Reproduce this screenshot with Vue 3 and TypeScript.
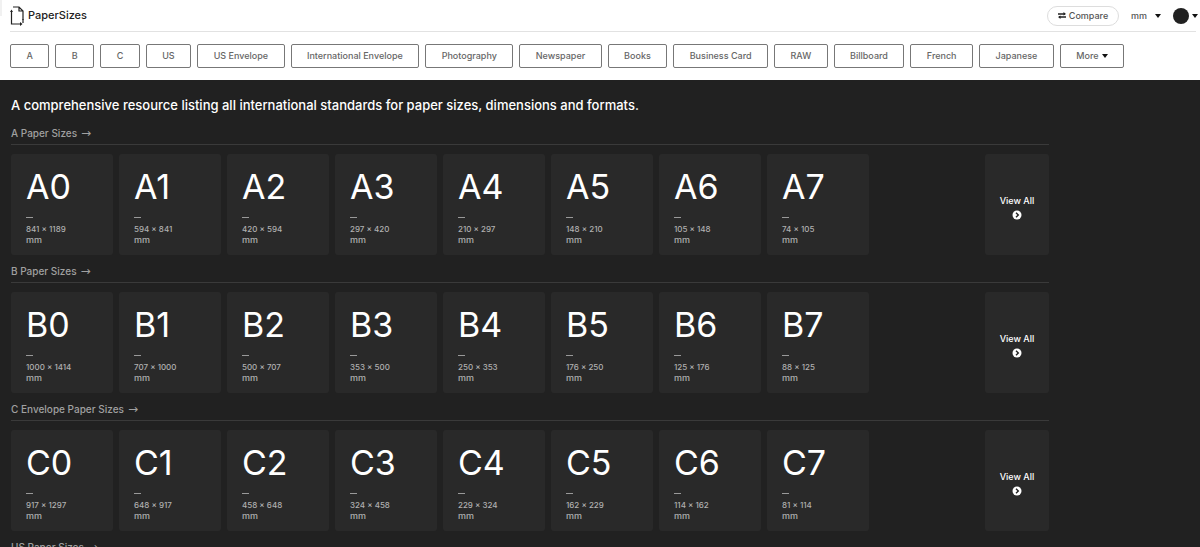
<script setup lang="ts">
import { ref } from 'vue'

interface PaperSize {
  name: string
  dims: string
}
interface Series {
  id: string
  title: string
  sizes: PaperSize[]
}

const categories: string[] = [
  'A', 'B', 'C', 'US', 'US Envelope', 'International Envelope', 'Photography',
  'Newspaper', 'Books', 'Business Card', 'RAW', 'Billboard', 'French', 'Japanese',
]

const unit = ref('mm')

function build(prefix: string, dims: string[]): PaperSize[] {
  return dims.map((d, i) => ({ name: `${prefix}${i}`, dims: d }))
}

const series: Series[] = [
  {
    id: 'a',
    title: 'A Paper Sizes',
    sizes: build('A', ['841 × 1189', '594 × 841', '420 × 594', '297 × 420', '210 × 297', '148 × 210', '105 × 148', '74 × 105']),
  },
  {
    id: 'b',
    title: 'B Paper Sizes',
    sizes: build('B', ['1000 × 1414', '707 × 1000', '500 × 707', '353 × 500', '250 × 353', '176 × 250', '125 × 176', '88 × 125']),
  },
  {
    id: 'c',
    title: 'C Envelope Paper Sizes',
    sizes: build('C', ['917 × 1297', '648 × 917', '458 × 648', '324 × 458', '229 × 324', '162 × 229', '114 × 162', '81 × 114']),
  },
  { id: 'us', title: 'US Paper Sizes', sizes: [] },
]
</script>

<template>
  <div class="page">
    <header class="header">
      <div class="topbar">
        <a class="brand" href="#">
          <svg class="logo" viewBox="0 0 14 20" aria-hidden="true">
            <path d="M3 1H9l4 4v9M9 1v4h4M1.500 6v12H10" fill="none" stroke="#222" stroke-width="1.200" />
            <path d="M0 6l1.500-2.500L3 6zM10 16l2.500 2-2.500 2z" fill="#222" />
            <path d="M13 13v4" stroke="#222" stroke-width="1.200" />
          </svg>
          <span>PaperSizes</span>
        </a>
        <div class="tools">
          <a class="compare" href="#compare">
            <svg class="swap" viewBox="0 0 8 7" aria-hidden="true">
              <path d="M0 2h7M1 5h7" stroke="#222" stroke-width="1.300" />
              <path d="M5.500 0L8 2 5.500 3.500zM2.500 3.500L0 5l2.500 2z" fill="#222" />
            </svg>
            <span>Compare</span>
          </a>
          <label class="unit">
            <select v-model="unit" aria-label="Unit">
              <option>mm</option>
              <option>cm</option>
              <option>in</option>
            </select>
            <svg class="caret" viewBox="0 0 6 4" aria-hidden="true"><path d="M0 0h6L3 4z" /></svg>
          </label>
          <button class="theme" type="button" aria-label="Theme">
            <span class="dot"></span>
            <svg class="caret" viewBox="0 0 6 4" aria-hidden="true"><path d="M0 0h6L3 4z" /></svg>
          </button>
        </div>
      </div>
      <nav class="nav">
        <a v-for="c in categories" :key="c" class="chip" href="#">{{ c }}</a>
        <button class="chip" type="button">
          More
          <svg class="caret" viewBox="0 0 6 4" aria-hidden="true"><path d="M0 0h6L3 4z" /></svg>
        </button>
      </nav>
    </header>

    <main class="main">
      <h1 class="lead">A comprehensive resource listing all international standards for paper sizes, dimensions and formats.</h1>
      <section v-for="s in series" :key="s.id" class="series">
        <h2 class="title"><a :href="`#${s.id}`">{{ s.title }} <span class="arrow">→</span></a></h2>
        <div v-if="s.sizes.length" class="row">
          <div class="cards">
            <a v-for="p in s.sizes" :key="p.name" class="card" :href="`#${p.name}`">
              <span class="name">{{ p.name }}</span>
              <span class="rule"></span>
              <span class="dims">{{ p.dims }}</span>
              <span class="mm">{{ unit }}</span>
            </a>
          </div>
          <a class="all" :href="`#${s.id}`">
            <span>View All</span>
            <svg viewBox="0 0 10 10" aria-hidden="true">
              <circle cx="5" cy="5" r="4.500" fill="#fff" />
              <path d="M4 2.800L6.300 5 4 7.200" fill="none" stroke="#222" stroke-width="1.400" />
            </svg>
          </a>
        </div>
      </section>
    </main>
  </div>
</template>

<style>
body {
  background: #212121;
}
</style>

<style scoped>
.page {
  font-family: Inter, "Liberation Sans", sans-serif;
  font-weight: 500;
  color: #fff;
}
.page * {
  box-sizing: border-box;
}
a {
  color: inherit;
  text-decoration: none;
}
.header {
  position: relative;
  background: #fff;
  color: #555;
  height: 80px;
  padding: 0 4px 0 10px;
}
.header::before {
  content: "";
  position: absolute;
  top: 0;
  left: 0;
  width: 2px;
  height: 16px;
  background: #f1f1f1;
}
.topbar {
  height: 32px;
  display: flex;
  align-items: center;
  justify-content: space-between;
  border-bottom: 1px solid #e2e2e2;
}
.brand {
  display: flex;
  align-items: center;
  gap: 4px;
  font-size: 11px;
  line-height: 16px;
  color: #222;
}
.brand span {
  padding-bottom: 2px;
}
.logo {
  width: 14px;
  height: 20px;
}
.tools {
  display: flex;
  align-items: center;
  margin-right: -2px;
}
.compare {
  display: flex;
  align-items: center;
  justify-content: center;
  gap: 3px;
  width: 72px;
  height: 20px;
  border: 1px solid #ddd;
  border-radius: 10px;
  font-size: 9px;
}
.swap {
  width: 8px;
  height: 7px;
}
.caret {
  width: 6px;
  height: 4px;
  fill: #111;
}
.unit {
  display: flex;
  align-items: center;
  margin-left: 12px;
}
.unit select {
  appearance: none;
  width: 24px;
  padding: 0;
  border: 0;
  background: none;
  font: inherit;
  font-size: 9px;
  color: #555;
}
.theme {
  display: flex;
  align-items: center;
  gap: 3px;
  margin-left: 12px;
  padding: 0;
  border: 0;
  background: none;
}
.dot {
  width: 16px;
  height: 16px;
  border-radius: 50%;
  background: #212121;
}
.nav {
  display: flex;
  gap: 6px;
  padding: 12px 72px 0 0;
}
.chip {
  display: flex;
  flex-grow: 1;
  align-items: center;
  justify-content: center;
  gap: 3px;
  height: 24px;
  padding: 0 15px;
  border: 1px solid #777;
  border-radius: 2px;
  background: #fff;
  font-family: inherit;
  font-size: 9px;
  font-weight: 500;
  line-height: 12px;
  color: #666;
  white-space: nowrap;
}
.main {
  padding: 16px 151px 0 11px;
}
.lead {
  margin: 0 0 10px;
  font-size: 13px;
  font-weight: 500;
  line-height: 18px;
  white-space: nowrap;
}
.series {
  margin-bottom: 7px;
}
.title {
  margin: 0 0 9px;
  padding-bottom: 2px;
  border-bottom: 1px solid #3a3a3a;
  font-size: 10px;
  font-weight: 500;
  line-height: 18px;
  color: #a0a0a0;
}
.title a {
  display: flex;
  gap: 4px;
}
.arrow {
  font-family: "DejaVu Sans", sans-serif;
  font-size: 12px;
  font-weight: 400;
}
.row {
  display: flex;
  justify-content: space-between;
}
.cards {
  display: flex;
  gap: 6px;
}
.card {
  display: flex;
  flex-direction: column;
  width: 102px;
  height: 101px;
  padding: 12px 15px 8px;
  border-radius: 3px;
  background: #292929;
  color: #b0b0b0;
}
.name {
  font-size: 34px;
  font-weight: 400;
  line-height: 42px;
  color: #fff;
}
.rule {
  flex: none;
  width: 7px;
  height: 1px;
  margin: 9px 0 5px;
  background: #999;
}
.dims {
  font-size: 8px;
  line-height: 12px;
}
.mm {
  font-size: 9px;
  line-height: 10px;
}
.all {
  display: flex;
  flex-direction: column;
  align-items: center;
  justify-content: center;
  gap: 2px;
  width: 64px;
  padding-top: 4px;
  border-radius: 3px;
  background: #292929;
  font-size: 9px;
  line-height: 14px;
}
.all svg {
  width: 10px;
  height: 10px;
}
</style>
